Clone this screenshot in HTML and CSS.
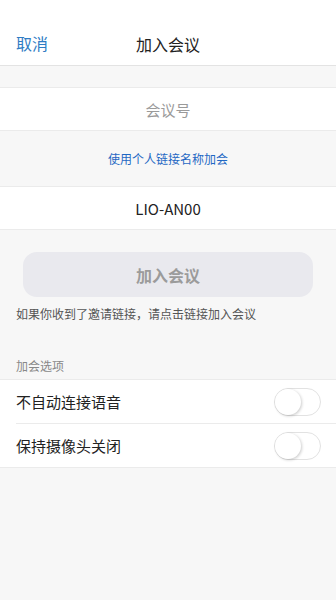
FILE: index.html
```html
<!DOCTYPE html>
<html lang="zh">
<head>
    <meta charset="UTF-8">
    <meta name="viewport" content="width=device-width, initial-scale=1.0">
    <title>加入会议</title>
    <link rel="stylesheet" href="styles.css">
</head>
<body>
    <div class="header">
        <span class="cancel">取消</span>
        <span class="title">加入会议</span>
    </div>

    <div class="gap"></div>

    <div class="field">
        <span class="placeholder">会议号</span>
    </div>

    <div class="link-row">
        <span class="link">使用个人链接名称加会</span>
    </div>

    <div class="field">
        <span class="name">LIO-AN00</span>
    </div>

    <div class="join-area">
        <button class="join-btn">加入会议</button>
        <p class="hint">如果你收到了邀请链接，请点击链接加入会议</p>
    </div>

    <div class="section-title">加会选项</div>
    <div class="options">
        <div class="option">
            <span>不自动连接语音</span>
            <span class="switch"><span class="knob"></span></span>
        </div>
        <div class="option">
            <span>保持摄像头关闭</span>
            <span class="switch"><span class="knob"></span></span>
        </div>
    </div>
</body>
</html>
```

FILE: styles.css
```css
body {
    margin: 0;
    font-family: 'Noto Sans CJK SC', 'Noto Sans', sans-serif;
    background: #f7f7f7;
    min-height: 100vh;
}
.header {
    background: #fff;
    height: 43px;
    padding-top: 22px;
    border-bottom: 1px solid #e3e3e3;
    display: flex;
    align-items: center;
    justify-content: center;
    position: relative;
}
.cancel {
    position: absolute;
    left: 16px;
    top: 22px;
    line-height: 43px;
    font-size: 16px;
    color: #2f7cc4;
}
.title {
    font-size: 16px;
    color: #222;
}
.gap {
    height: 21px;
    border-bottom: 1px solid #ebebeb;
}
.field {
    background: #fff;
    height: 42px;
    border-bottom: 1px solid #ebebeb;
    display: flex;
    align-items: center;
    justify-content: center;
}
.placeholder {
    font-size: 15px;
    color: #9a9a9a;
}
.name {
    font-size: 15px;
    color: #222;
}
.link-row {
    height: 55px;
    border-bottom: 1px solid #ebebeb;
    display: flex;
    align-items: center;
    justify-content: center;
}
.link {
    font-size: 12px;
    color: #1f68c4;
}
.join-area {
    padding: 22px 16px 0;
}
.join-btn {
    display: block;
    width: 290px;
    height: 45px;
    margin: 0 auto;
    border: none;
    border-radius: 14px;
    background: #e9e9ee;
    color: #9b9b9b;
    font-family: inherit;
    font-size: 16px;
    font-weight: bold;
}
.hint {
    margin: 8px 0 0;
    font-size: 12px;
    color: #555;
}
.section-title {
    padding: 35px 16px 5px;
    font-size: 12px;
    color: #888;
}
.options {
    background: #fff;
    border-top: 1px solid #ebebeb;
    border-bottom: 1px solid #ebebeb;
}
.option {
    height: 43px;
    margin-left: 16px;
    padding-right: 15px;
    display: flex;
    align-items: center;
    justify-content: space-between;
    font-size: 15px;
    color: #222;
}
.option + .option {
    border-top: 1px solid #ebebeb;
}
.switch {
    width: 45px;
    height: 26px;
    border: 1px solid #e2e2e2;
    border-radius: 14px;
    background: #fff;
    position: relative;
}
.knob {
    position: absolute;
    left: 0;
    top: 0;
    width: 26px;
    height: 26px;
    border-radius: 50%;
    background: #fff;
    box-shadow: 1px 1px 3px rgba(0, 0, 0, 0.2);
}
```
